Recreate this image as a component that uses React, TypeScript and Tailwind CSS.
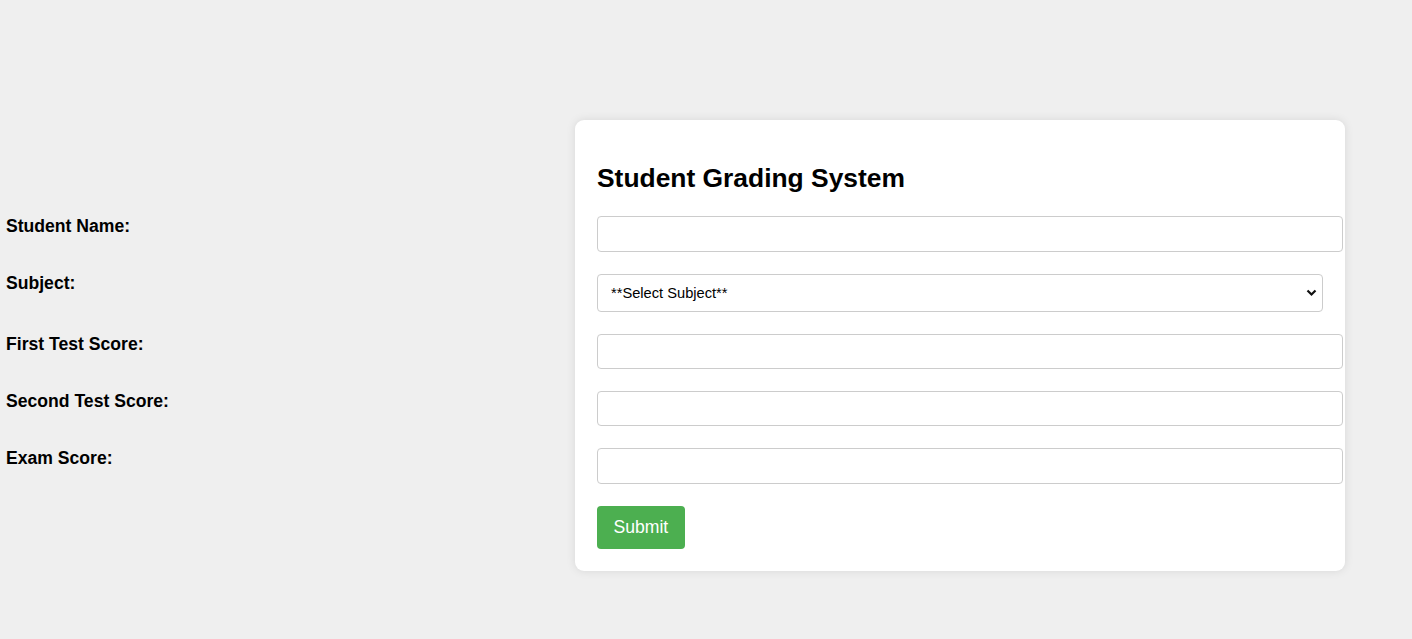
export default function App() {
    const fields = [
        { label: "Student Name:", kind: "input" },
        { label: "Subject:", kind: "select" },
        { label: "First Test Score:", kind: "input" },
        { label: "Second Test Score:", kind: "input" },
        { label: "Exam Score:", kind: "input" },
    ];

    return (
        <div className="flex min-h-[639px] w-full items-start bg-[#efefef] pt-[120px] font-['Liberation_Sans',Arial,sans-serif] text-black">
            {/* labels sit outside the card, lined up with each field */}
            <div className="flex w-[575px] shrink-0 flex-col pl-[6px] pt-[96px]">
                {fields.map((f) => (
                    <label
                        key={f.label}
                        className={`mb-[22px] block text-[17.6px] font-bold leading-[20.2px] ${f.kind === "select" ? "h-[38.5px]" : "h-[35.2px]"}`}
                    >
                        {f.label}
                    </label>
                ))}
            </div>

            <div className="w-[770px] shrink-0 rounded-[9px] bg-white p-[22px] shadow-[0_0_10px_rgba(0,0,0,0.1)]">
                <h2 className="mb-[23px] mt-[21px] text-[26.4px] font-bold leading-[30.4px]">Student Grading System</h2>
                {fields.map((f) =>
                    f.kind === "select" ? (
                        <div key={f.label} className="relative mb-[22px] h-[38.5px] w-[726px]">
                            <select className="h-full w-full appearance-none rounded-[4px] border border-[#cccccc] bg-white pl-[13px] text-[14.67px] text-black outline-none">
                                <option>**Select Subject**</option>
                                <option>Mathematics</option>
                                <option>English</option>
                            </select>
                            <svg className="pointer-events-none absolute right-[6px] top-[15px]" width="11" height="8" viewBox="0 0 11 8">
                                <path d="M1.5 1.5 L5.5 5.5 L9.5 1.5" fill="none" stroke="#111" strokeWidth="2.2" />
                            </svg>
                        </div>
                    ) : (
                        <input
                            key={f.label}
                            type="text"
                            className="mb-[22px] block h-[35.2px] w-[746px] rounded-[4px] border border-[#cccccc] bg-white px-[9px] text-[17.6px] outline-none"
                        />
                    )
                )}
                <button className="h-[43px] rounded-[4px] bg-[#4caf50] px-[16.5px] text-[17.6px] text-white">Submit</button>
            </div>
        </div>
    );
}
